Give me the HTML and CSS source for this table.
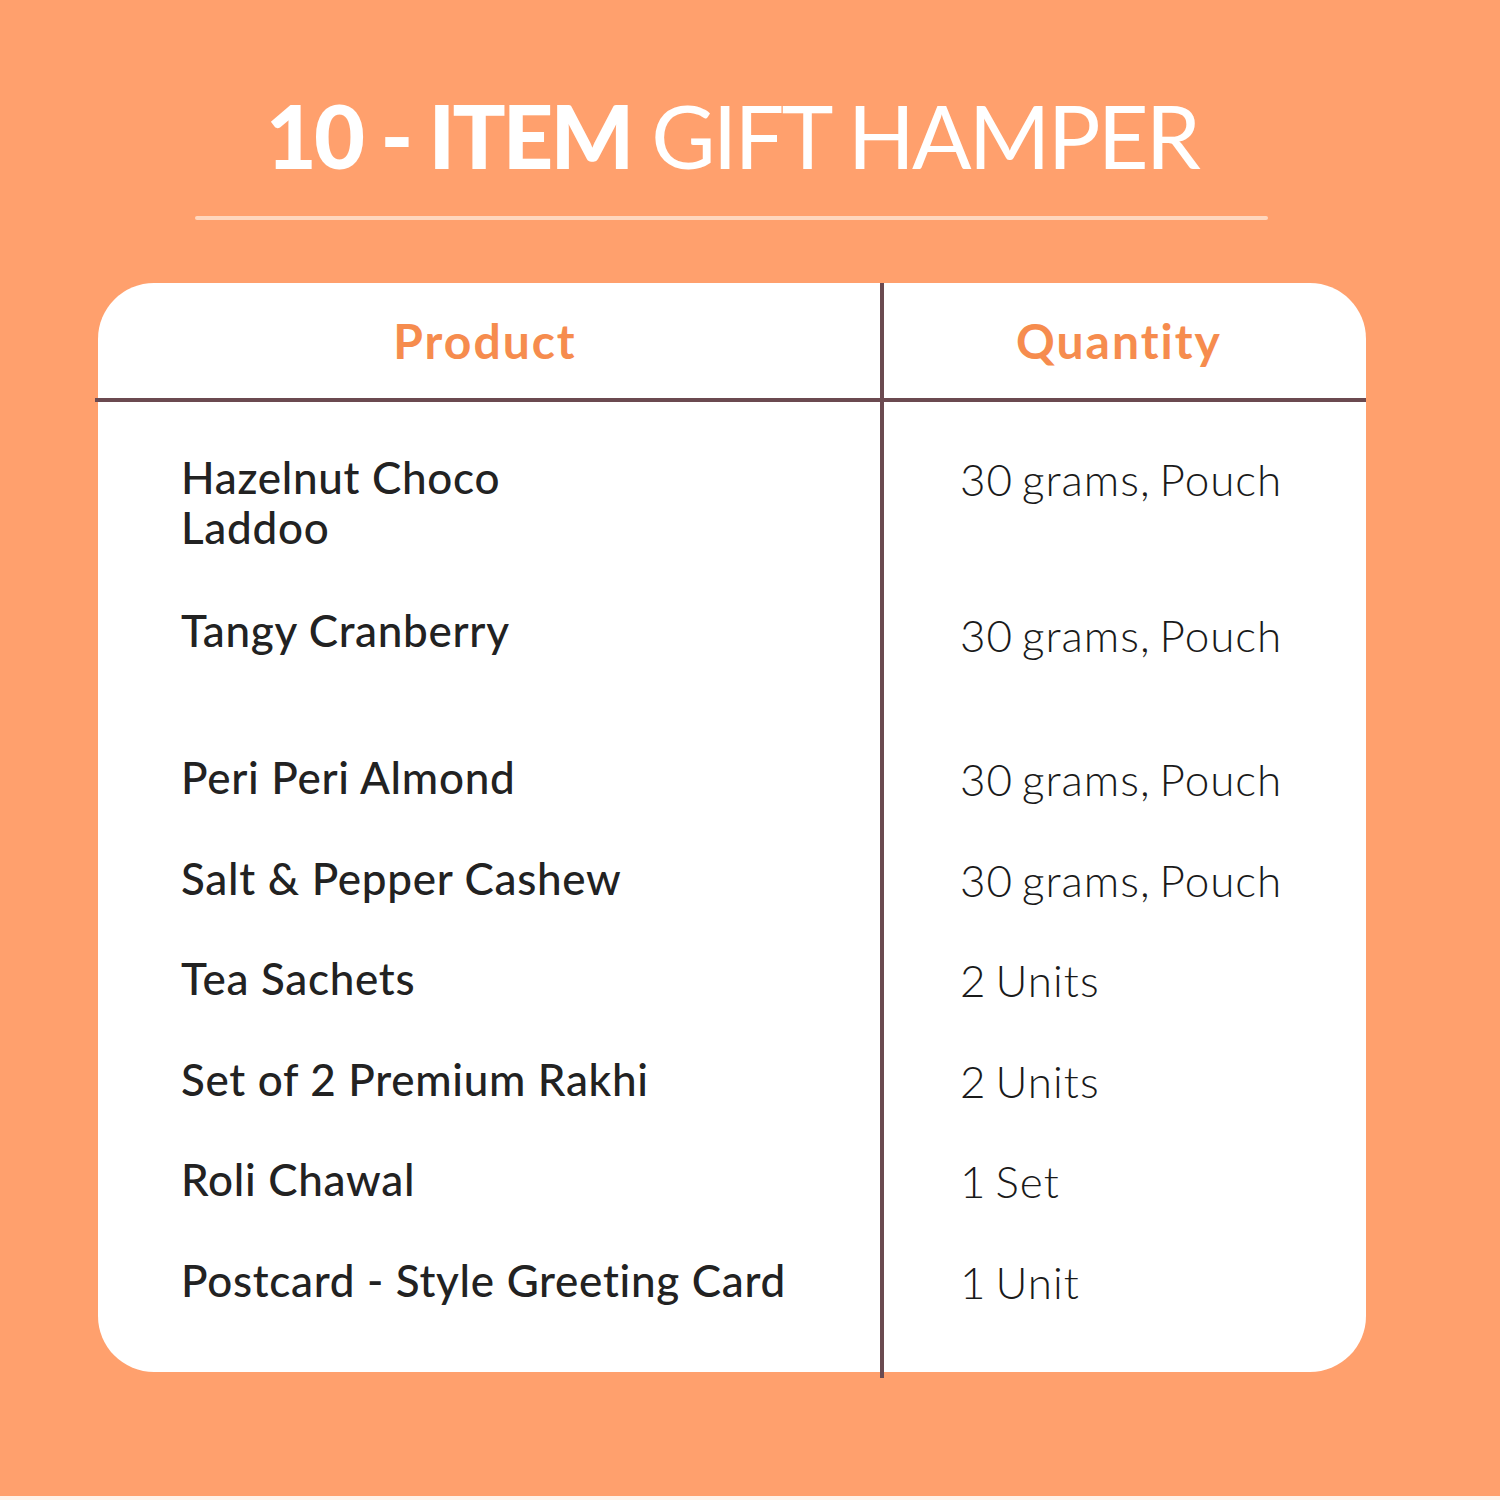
FILE: index.html
```html
<!DOCTYPE html>
<html lang="en">
<head>
<meta charset="utf-8">
<title>10 - Item Gift Hamper</title>
<link rel="stylesheet" href="styles.css">
</head>
<body>
<main class="page">
  <div class="wrap">
    <h1 class="title"><strong>10 - ITEM</strong> GIFT HAMPER</h1>
    <div class="rule"></div>
    <section class="card">
      <div class="row head">
        <div class="cell">Product</div>
        <div class="cell qty">Quantity</div>
      </div>
      <div class="body">
        <div class="row r1">
          <div class="cell name">Hazelnut Choco<br>Laddoo</div>
          <div class="cell qty">30 grams, Pouch</div>
        </div>
        <div class="row r2">
          <div class="cell name">Tangy Cranberry</div>
          <div class="cell qty shift">30 grams, Pouch</div>
        </div>
        <div class="row">
          <div class="cell name">Peri Peri Almond</div>
          <div class="cell qty">30 grams, Pouch</div>
        </div>
        <div class="row">
          <div class="cell name">Salt &amp; Pepper Cashew</div>
          <div class="cell qty">30 grams, Pouch</div>
        </div>
        <div class="row">
          <div class="cell name">Tea Sachets</div>
          <div class="cell qty">2 Units</div>
        </div>
        <div class="row">
          <div class="cell name">Set of 2 Premium Rakhi</div>
          <div class="cell qty">2 Units</div>
        </div>
        <div class="row">
          <div class="cell name">Roli Chawal</div>
          <div class="cell qty">1 Set</div>
        </div>
        <div class="row last">
          <div class="cell name">Postcard - Style Greeting Card</div>
          <div class="cell qty">1 Unit</div>
        </div>
      </div>
    </section>
  </div>
  <div class="strip"></div>
</main>
</body>
</html>
```
FILE: styles.css
```css
* { box-sizing: border-box; }
html, body { margin: 0; padding: 0; }
body {
  background: #ffa06d;
  font-family: Lato, "Noto Sans", sans-serif;
  font-variant-ligatures: none;
}
.page {
  height: 1500px;
  display: flex;
  flex-direction: column;
}
.wrap {
  width: 1268px;
  margin-left: 98px;
  flex: 1;
}
.title {
  margin: 90px 0 0;
  height: 90px;
  font-size: 88px;
  line-height: 90px;
  font-weight: 400;
  color: #fff;
  text-align: center;
  letter-spacing: -2.8px;
  white-space: nowrap;
}
.title strong { font-weight: 900; }
.rule {
  width: 1073px;
  height: 4px;
  margin: 36px 0 0 97px;
  background: #ffd6bd;
  border-radius: 2px;
}
.card {
  margin-top: 63px;
  height: 1089px;
  background: #fff;
  border-radius: 56px;
  position: relative;
}
.card::after {
  content: "";
  position: absolute;
  left: 782px;
  top: 0;
  bottom: -6px;
  width: 4px;
  background: #6b4a50;
}
.row {
  display: grid;
  grid-template-columns: 784px 1fr;
}
.head {
  height: 119px;
  border-bottom: 4px solid #6b4a50;
  margin-left: -3px;
  padding-left: 3px;
}
.head .cell {
  display: flex;
  align-items: center;
  justify-content: center;
  font-size: 48px;
  font-weight: 700;
  letter-spacing: 2px;
  word-spacing: 0;
  color: #f68c4e;
  padding: 0 10px 0 0;
}
.body { padding-top: 50px; }
.cell {
  font-size: 44px;
  line-height: 50px;
  color: #222;
}
.name {
  padding-left: 83px;
  font-weight: 500;
  letter-spacing: 0.7px;
}
.body .row { padding-bottom: 48.6px; }
.body .r1 { padding-bottom: 53px; }
.body .r2 { padding-bottom: 92px; }
.qty {
  padding-left: 78px;
  font-weight: 300;
  color: #1a1a1a;
  letter-spacing: 1px;
  word-spacing: -4px;
}
.body .qty { padding-top: 2px; }
.body .shift { padding-top: 5px; }
.strip {
  height: 4px;
  background: #fff3ea;
}
```
